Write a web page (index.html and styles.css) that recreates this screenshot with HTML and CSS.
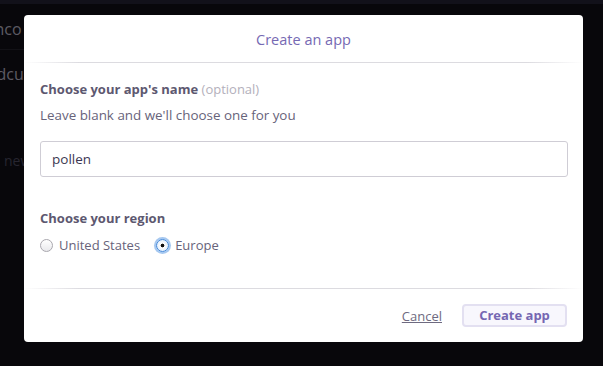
FILE: index.html
```
<!DOCTYPE html>
<html>
<head>
	<meta charset="utf-8">
	<title>Create an app</title>
	<link rel="stylesheet" href="styles.css">
</head>
<body>
<div class="page">
	<div class="topbar"></div>
	<div class="sidebar">
		<div class="side-item first">Inco</div>
		<div class="side-item second">Oldcup</div>
		<div class="side-item dim">new</div>
	</div>
</div>
<div class="overlay">
	<div class="modal">
		<div class="modal-head">Create an app</div>
		<div class="rule"></div>
		<div class="modal-body">
			<label class="label" for="name">Choose your app's name <span class="opt">(optional)</span></label>
			<p class="hint">Leave blank and we'll choose one for you</p>
			<input id="name" class="field" type="text" value="pollen">
			<div class="label region">Choose your region</div>
			<div class="radios">
				<label class="radio"><span class="dot"></span>United States</label>
				<label class="radio"><span class="dot on"></span>Europe</label>
			</div>
		</div>
		<div class="rule"></div>
		<div class="modal-foot">
			<a href="javascript:;" class="cancel">Cancel</a>
			<a href="javascript:;" class="btn">Create app</a>
		</div>
	</div>
</div>
</body>
</html>
```
FILE: styles.css
```
*{
	margin: 0;
	padding: 0;
	box-sizing: border-box;
}
body{
	width: 603px;
	height: 366px;
	overflow: hidden;
	background: #0d0c11;
	font-family: "Open Sans", "Liberation Sans", sans-serif;
	position: relative;
}
.topbar{
	height: 4px;
	background: #1d1b29;
}
.sidebar{
	width: 90px;
	padding-top: 14px;
}
.side-item{
	color: #8e8a99;
	font-size: 16px;
	line-height: 22px;
	text-indent: -10px;
	white-space: nowrap;
}
.side-item.first{
	height: 32px;
	border-bottom: 1px solid #1c1b22;
}
.side-item.second{
	margin-top: 13px;
	text-indent: -20px;
}
.side-item.dim{
	color: #3c3a4a;
	font-size: 14px;
	margin-top: 65px;
	text-indent: 4px;
}
.overlay{
	position: absolute;
	left: 0;
	top: 0;
	width: 603px;
	height: 366px;
	background: rgba(0,0,0,.35);
}
.modal{
	position: absolute;
	left: 24px;
	top: 15px;
	width: 559px;
	height: 327px;
	background: #fff;
	border-radius: 4px;
}
.modal-head{
	height: 47px;
	padding-top: 15px;
	text-align: center;
	color: #7669b3;
	font-size: 14.5px;
	line-height: 19px;
}
.rule{
	height: 1px;
	background: linear-gradient(to right, #fff 0%, #dcdbe0 10%, #dcdbe0 90%, #fff 100%);
}
.modal-body{
	padding: 16px 16px 0;
	height: 225px;
}
.label{
	display: block;
	color: #5d5870;
	font-size: 13px;
	font-weight: bold;
	line-height: 20px;
}
.opt{
	color: #b3b0bb;
	font-weight: normal;
}
.hint{
	margin-top: 6px;
	color: #67637a;
	font-size: 13.4px;
	line-height: 20px;
}
.field{
	display: block;
	margin-top: 16px;
	width: 528px;
	height: 36px;
	border: 1px solid #cfcdd5;
	border-radius: 3px;
	padding: 0 11px;
	font-family: inherit;
	font-size: 13.5px;
	color: #3c3752;
	outline: none;
}
.region{
	margin-top: 31px;
}
.radios{
	display: flex;
	gap: 16px;
	margin-top: 7px;
}
.radio{
	display: flex;
	align-items: center;
	gap: 6px;
	color: #67637a;
	font-size: 13px;
	line-height: 20px;
}
.dot{
	width: 13px;
	height: 13px;
	border-radius: 50%;
	border: 1px solid #a9a7ae;
	background: linear-gradient(#fff, #e9e9ec);
}
.dot.on{
	border-color: #3f86d9;
	background: radial-gradient(circle, #111 0 1.6px, #fff 2.2px, #cfe2f8 100%);
	box-shadow: 0 0 0 2px #a6c8f0;
}
.modal-foot{
	display: flex;
	justify-content: flex-end;
	align-items: center;
	gap: 20px;
	padding: 15px 16px 0;
}
.cancel{
	color: #6e6a80;
	font-size: 13px;
	text-decoration: underline;
}
.btn{
	width: 105px;
	height: 23px;
	border: 2px solid #e3e0f1;
	border-radius: 4px;
	background: #f8f7fd;
	color: #7567b2;
	font-size: 13px;
	font-weight: bold;
	line-height: 19px;
	text-align: center;
	text-decoration: none;
}
```
